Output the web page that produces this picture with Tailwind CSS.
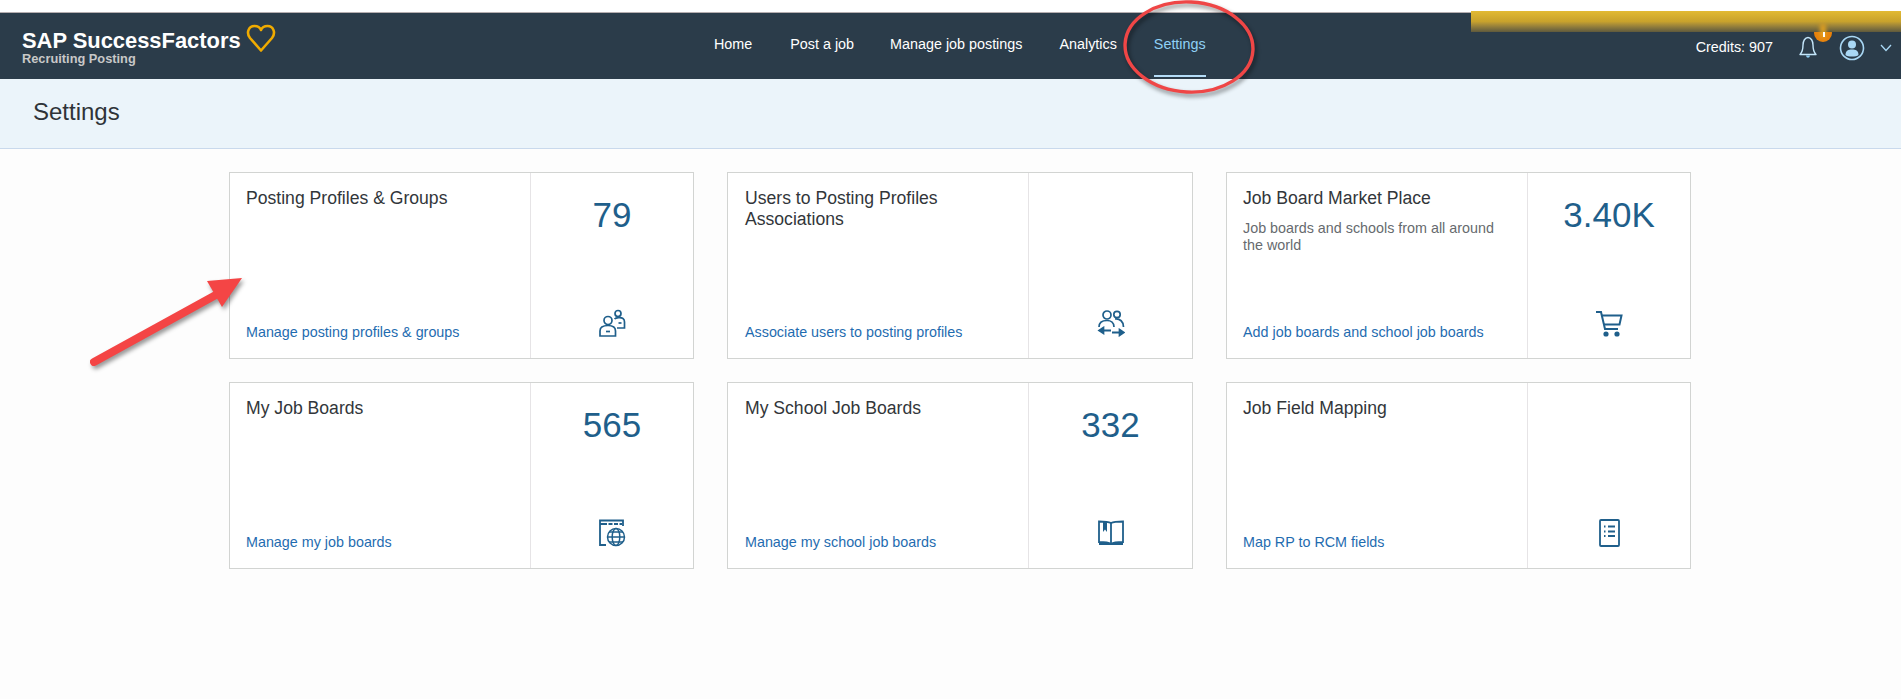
<!DOCTYPE html>
<html lang="en">
<head>
    <meta charset="UTF-8">
    <title>Settings</title>
    <script src="https://cdn.jsdelivr.net/npm/@tailwindcss/browser@4"></script>
</head>
<body class="bg-[#fdfdfd] font-['Liberation_Sans',Arial,sans-serif]">
    <div class="relative h-[699px] w-[1901px] overflow-hidden">
        <!-- top strip -->
        <div class="h-[13px] bg-white border-b border-[#b5aeb0]"></div>

        <!-- header -->
        <header class="flex h-[66px] items-center bg-[#2b3c4a]">
            <div class="flex w-[714px] pl-[22px]">
                <div class="w-[224px] mt-[3px]">
                    <div class="text-[21.9px] leading-[22px] font-bold text-white whitespace-nowrap">SAP SuccessFactors</div>
                    <div class="text-[12.8px] leading-[14px] font-bold text-[#c8c8c8] whitespace-nowrap">Recruiting Posting</div>
                </div>
                <svg class="w-[30px] h-[29px] -mt-[3px]" viewBox="0 0 30 29" fill="none" stroke="#f0ab00" stroke-width="2.6" stroke-linejoin="round">
                    <path d="M15 26.5 L4 14 C0 9 2.5 2 8.5 2 C11.5 2 14 3.5 15 6 C16 3.5 18.5 2 21.5 2 C27.500 2 30 9 26 14 Z"/>
                </svg>
            </div>
            <nav class="flex h-full items-start text-[14.35px] leading-[20px] text-white whitespace-nowrap">
                <a class="mt-[21px]">Home</a>
                <a class="mt-[21px] ml-[38px]">Post a job</a>
                <a class="mt-[21px] ml-[36px]">Manage job postings</a>
                <a class="mt-[21px] ml-[37px]">Analytics</a>
                <a class="ml-[37px] flex h-full flex-col pt-[21px] text-[#8fd0f5]">
                    Settings
                    <span class="mt-auto mb-[2px] h-[2px] bg-[#b4dcf7]"></span>
                </a>
            </nav>
            <div class="ml-auto flex items-center pr-[9px] pt-[3px]">
                <span class="mt-[1px] text-[14.35px] text-white whitespace-nowrap">Credits: 907</span>
                <svg class="ml-[26px] w-[18px] h-[23px]" viewBox="0 0 18 23" fill="none" stroke="#c4e6fa" stroke-width="1.4">
                    <path d="M1 18.500 C3.500 16 4 13 4 9 C4 5 6 1.500 9 1.500 C12 1.500 14 5 14 9 C14 13 14.500 16 17 18.500 Z" stroke-linejoin="round"/>
                    <path d="M7 19.500 C7.500 22.500 10.500 22.500 11 19.500 Z" fill="#8fd0f5" stroke="none"/>
                </svg>
                <svg class="ml-[22px] w-[26px] h-[26px]" viewBox="0 0 26 26" fill="none">
                    <circle cx="13" cy="13" r="11.500" stroke="#a9d8f5" stroke-width="1.6"/>
                    <circle cx="13" cy="9.500" r="4" fill="#a9d8f5"/>
                    <path d="M6.500 20 C6.500 15.500 9.500 14.500 13 14.500 C16.500 14.500 19.500 15.500 19.500 20 C17.500 22 8.500 22 6.500 20 Z" fill="#a9d8f5"/>
                </svg>
                <svg class="ml-[15px] w-[12px] h-[8px]" viewBox="0 0 12 8" fill="none" stroke="#a9d8f5" stroke-width="1.3">
                    <path d="M1 1 L6 6.500 L11 1"/>
                </svg>
            </div>
        </header>

        <!-- page title -->
        <div class="flex h-[70px] items-center bg-[#ebf4fa] border-b border-[#c9d9ec] pl-[33px] pb-[4px]">
            <h1 class="text-[24px] text-[#2f3338]">Settings</h1>
        </div>

        <!-- tiles -->
        <main class="ml-[229px] mt-[23px] grid grid-cols-[465px_466px_465px] gap-x-[33px] gap-y-[23px]">
            <div class="flex h-[187px] border border-[#d2d4d2] bg-white">
                <div class="flex w-[300px] flex-col px-[16px] pt-[15px] pb-[16px]">
                    <div class="text-[17.6px] leading-[21px] text-[#32363a]">Posting Profiles &amp; Groups</div>
                    <a class="mt-auto text-[14.33px] leading-[20px] text-[#1f6cb0]">Manage posting profiles &amp; groups</a>
                </div>
                <div class="flex flex-1 flex-col items-center border-l border-[#e6e4e6] pt-[21px] pb-[21px]">
                    <div class="text-[35px] leading-[42px] text-[#1f5f8b]">79</div>
                    <svg class="mt-auto w-[28px] h-[28px]" viewBox="0 0 28 28" fill="none" stroke="#1f5f8b" stroke-width="1.7">
                        <circle cx="10" cy="11.500" r="4"/>
                        <path d="M2 27 V22 C2 18 6 16.500 10 16.500 C14 16.500 17.500 18 17.500 22 V27 Z"/>
                        <path d="M8 22.500 H12"/>
                        <circle cx="20" cy="4.500" r="3"/>
                        <path d="M16.500 10 C18 8.500 23 8 25 9.500 C26.500 10.500 26.500 12 26.500 13 V19 H19"/>
                        <path d="M20.500 14 H23.500"/>
                    </svg>
                </div>
            </div>

            <div class="flex h-[187px] border border-[#d2d4d2] bg-white">
                <div class="flex w-[300px] flex-col px-[17px] pt-[15px] pb-[16px]">
                    <div class="text-[17.6px] leading-[21px] text-[#32363a]">Users to Posting Profiles<br>Associations</div>
                    <a class="mt-auto text-[14.33px] leading-[20px] text-[#1f6cb0]">Associate users to posting profiles</a>
                </div>
                <div class="flex flex-1 flex-col items-center border-l border-[#e6e4e6] pt-[21px] pb-[21px]">
                    <svg class="mt-auto w-[28px] h-[28px]" viewBox="0 0 28 28" fill="none" stroke="#1f5f8b" stroke-width="1.7">
                        <circle cx="10" cy="6" r="4"/>
                        <circle cx="20" cy="5.500" r="3.200"/>
                        <path d="M2 18 C2 13 5 11.500 10 11.500 C14 11.500 17 14 17 18"/>
                        <path d="M18 10 C23 9.500 26.500 12.500 26.500 18"/>
                        <path d="M3 21.500 H14 M15 23.500 H26" stroke-width="1.8"/>
                        <path d="M6.500 18.500 L2 21.500 L6.500 24.500 Z M22.500 20.500 L27 23.500 L22.500 26.500 Z" fill="#1f5f8b"/>
                    </svg>
                </div>
            </div>

            <div class="flex h-[187px] border border-[#d2d4d2] bg-white">
                <div class="flex w-[300px] flex-col px-[16px] pt-[15px] pb-[16px]">
                    <div class="text-[17.6px] leading-[21px] text-[#32363a]">Job Board Market Place</div>
                    <p class="mt-[11px] text-[14.33px] leading-[17px] text-[#666a6e]">Job boards and schools from all around the world</p>
                    <a class="mt-auto text-[14.33px] leading-[20px] text-[#1f6cb0]">Add job boards and school job boards</a>
                </div>
                <div class="flex flex-1 flex-col items-center border-l border-[#e6e4e6] pt-[21px] pb-[21px]">
                    <div class="text-[35px] leading-[42px] text-[#1f5f8b]">3.40K</div>
                    <svg class="mt-auto w-[28px] h-[28px]" viewBox="0 0 28 28" fill="none" stroke="#1f5f8b" stroke-width="2">
                        <path d="M1 3 H6 L10 20 H23"/>
                        <path d="M7 6.500 H26.500 L24.500 15.500 H9"/>
                        <circle cx="11" cy="25" r="1.600" fill="#1f5f8b"/>
                        <circle cx="22" cy="25" r="1.600" fill="#1f5f8b"/>
                    </svg>
                </div>
            </div>

            <div class="flex h-[187px] border border-[#d2d4d2] bg-white">
                <div class="flex w-[300px] flex-col px-[16px] pt-[15px] pb-[16px]">
                    <div class="text-[17.6px] leading-[21px] text-[#32363a]">My Job Boards</div>
                    <a class="mt-auto text-[14.33px] leading-[20px] text-[#1f6cb0]">Manage my job boards</a>
                </div>
                <div class="flex flex-1 flex-col items-center border-l border-[#e6e4e6] pt-[21px] pb-[21px]">
                    <div class="text-[35px] leading-[42px] text-[#1f5f8b]">565</div>
                    <svg class="mt-auto w-[28px] h-[28px]" viewBox="0 0 28 28" fill="none" stroke="#1f5f8b" stroke-width="1.500">
                        <path d="M8 26 H2 V1.500 H25 V7" stroke-width="1.800"/>
                        <path d="M2 5 H24" stroke-width="2.200" stroke-dasharray="7 1.500 4 1.500 4 1.500 4"/>
                        <circle cx="18" cy="18" r="8.500" fill="white"/>
                        <ellipse cx="18" cy="18" rx="3.800" ry="8.500"/>
                        <path d="M9.500 18 H26.500 M11 13 H25 M11 23 H25"/>
                    </svg>
                </div>
            </div>

            <div class="flex h-[187px] border border-[#d2d4d2] bg-white">
                <div class="flex w-[300px] flex-col px-[17px] pt-[15px] pb-[16px]">
                    <div class="text-[17.6px] leading-[21px] text-[#32363a]">My School Job Boards</div>
                    <a class="mt-auto text-[14.33px] leading-[20px] text-[#1f6cb0]">Manage my school job boards</a>
                </div>
                <div class="flex flex-1 flex-col items-center border-l border-[#e6e4e6] pt-[21px] pb-[21px]">
                    <div class="text-[35px] leading-[42px] text-[#1f5f8b]">332</div>
                    <svg class="mt-auto w-[28px] h-[28px]" viewBox="0 0 28 28" fill="none" stroke="#1f5f8b" stroke-width="1.800">
                        <path d="M14 4 C11 2.500 5 2.500 2 2.500 V23 C6 23 11 23 14 25 C17 23 22 23 26 23 V2.500 C23 2.500 17 2.500 14 4 Z"/>
                        <path d="M14 4 V25"/>
                        <path d="M6 2.500 H10 V13 L8 10.500 L6 13 Z" fill="#1f5f8b" stroke="none"/>
                        <path d="M2 25 H26" stroke-width="2"/>
                    </svg>
                </div>
            </div>

            <div class="flex h-[187px] border border-[#d2d4d2] bg-white">
                <div class="flex w-[300px] flex-col px-[16px] pt-[15px] pb-[16px]">
                    <div class="text-[17.6px] leading-[21px] text-[#32363a]">Job Field Mapping</div>
                    <a class="mt-auto text-[14.33px] leading-[20px] text-[#1f6cb0]">Map RP to RCM fields</a>
                </div>
                <div class="flex flex-1 flex-col items-center border-l border-[#e6e4e6] pt-[21px] pb-[21px]">
                    <svg class="mt-auto w-[28px] h-[28px]" viewBox="0 0 28 28" fill="none" stroke="#1f5f8b" stroke-width="1.800">
                        <rect x="5" y="1" width="19" height="26" rx="1"/>
                        <path d="M9 7.500 H10.500 M13 7.500 H20 M9 12.500 H10.500 M13 12.500 H20 M9 17 H10.500 M13 17 H20" stroke-width="2"/>
                    </svg>
                </div>
            </div>
        </main>

        <!-- annotations drawn over the screenshot -->
        <div class="absolute left-[1814px] top-[24px] h-[18px] w-[18px] rounded-full bg-[#e8820c]"></div>
        <div class="absolute left-[1471px] top-[11px] h-[21px] w-[430px] bg-gradient-to-b from-[#e2ba34] via-[#c8a22c] to-[#5f5a3c]"></div>
        <div class="absolute left-[1820px] top-[24px] h-[14px] w-[6px] bg-[#e0a020] blur-[2px]"></div>
        <div class="absolute left-[1823px] top-[32px] h-[5px] w-[2px] bg-white"></div>

        <svg class="absolute left-[1120px] top-0 h-[100px] w-[140px] drop-shadow-[2px_3px_2px_rgba(0,0,0,0.45)]" viewBox="0 0 140 100" fill="none">
            <ellipse cx="69" cy="47" rx="64" ry="45" stroke="#ef4646" stroke-width="3.400" transform="rotate(3 69 47)"/>
        </svg>
        <svg class="absolute left-[85px] top-[270px] h-[100px] w-[165px] drop-shadow-[2px_3px_2px_rgba(0,0,0,0.4)]" viewBox="0 0 165 100" fill="none">
            <path d="M9 92 L138 21" stroke="#f44545" stroke-width="8" stroke-linecap="round"/>
            <path d="M157 8 L122 11 L137 37 Z" fill="#f44545"/>
        </svg>
    </div>
</body>
</html>
